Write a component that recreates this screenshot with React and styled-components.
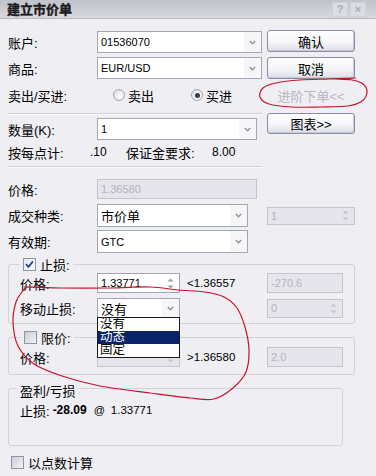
import React from "react";
import styled, { createGlobalStyle } from "styled-components";

const GlobalStyle = createGlobalStyle`
  html, body {
    margin: 0;
    padding: 0;
    background: #eeeef3;
  }
  body {
    font-family: "Liberation Sans", "Noto Sans CJK SC", sans-serif;
    font-size: 13px;
    color: #000;
  }
`;

const Dialog = styled.div`
  position: relative;
  width: 376px;
  height: 476px;
  overflow: hidden;
  background: #eeeef3;
`;

const TitleBar = styled.div`
  display: flex;
  align-items: center;
  height: 18px;
  padding: 0 10px 0 7px;
  background: linear-gradient(#c2c4cb, #ccced4 55%, #d9dadf);
  border-bottom: 1px solid #b6b8c0;
`;

const Title = styled.div`
  flex: 1;
  font-family: "Noto Sans CJK SC", sans-serif;
  font-size: 13px;
  font-weight: bold;
  line-height: 18px;
  color: #1c1c1e;
  -webkit-text-stroke: 0.4px #1c1c1e;
`;

const TitleBtn = styled.div`
  box-sizing: border-box;
  width: 16px;
  height: 15px;
  margin-left: 2px;
  display: flex;
  align-items: center;
  justify-content: center;
  border: 1px solid #cfd0d7;
  background: #dcdde2;
  color: #a9abb5;
  font-size: 11px;
  font-weight: bold;
`;

const Body = styled.div`
  padding: 12px 21px 0 8px;
`;

const Top = styled.div`
  display: flex;
`;

const LeftCol = styled.div`
  width: 254px;
`;

const RightCol = styled.div`
  display: flex;
  flex-direction: column;
  width: 88px;
  margin-left: 5px;
`;

const Row = styled.div`
  display: flex;
  align-items: center;
  height: ${(p) => p.$h || 22}px;
  margin-top: ${(p) => p.$mt || 0}px;
  white-space: nowrap;
`;

const Label = styled.div`
  flex: none;
  width: ${(p) => p.$w || 89}px;
`;

const Cell = styled.div`
  flex: none;
  width: ${(p) => (p.$w ? `${p.$w}px` : "auto")};
  font-size: ${(p) => (p.$num ? 12 : 13)}px;
`;

const Separator = styled.div`
  height: 0;
  margin-top: ${(p) => p.$mt || 0}px;
  border-top: 1px solid #cfd0d8;
  border-bottom: 1px solid #fbfbfd;
`;

const Field = styled.div`
  position: relative;
  flex: none;
  display: flex;
  align-items: center;
  box-sizing: border-box;
  width: ${(p) => p.$w}px;
  height: ${(p) => p.$h || 22}px;
  margin-left: ${(p) => (p.$right ? "auto" : "0")};
  border: 1px solid ${(p) => (p.$disabled ? "#c3c4ce" : "#a2a7b5")};
  background: ${(p) => (p.$disabled ? "#e5e5eb" : "#fff")};
`;

const Value = styled.span`
  flex: 1;
  padding-left: 3px;
  overflow: hidden;
  font-size: ${(p) => (p.$cjk ? 13 : 11)}px;
  color: ${(p) => (p.$disabled ? "#b3b4c0" : "#000")};
`;

const DropBtn = styled.div`
  align-self: stretch;
  width: 17px;
  display: flex;
  align-items: center;
  justify-content: center;
  background: #f6f6f9;
`;

const Arrows = styled.div`
  display: flex;
  flex-direction: column;
  align-items: center;
  gap: 3px;
  width: 13px;
  margin-right: 2px;
  fill: ${(p) => (p.$disabled ? "#c4c5ce" : "#9c9ea8")};
`;

const DropList = styled.div`
  position: absolute;
  top: 100%;
  left: -1px;
  z-index: 2;
  box-sizing: border-box;
  width: calc(100% + 2px);
  border: 1px solid #1a1a1a;
  background: #fff;
`;

const DropItem = styled.div`
  height: 13px;
  overflow: hidden;
  line-height: 13px;
  padding-left: 2px;
  font-size: 12.5px;
  background: ${(p) => (p.$sel ? "#0a246a" : "#fff")};
  color: ${(p) => (p.$sel ? "#fff" : "#000")};
`;

const Button = styled.button`
  box-sizing: border-box;
  width: 88px;
  height: ${(p) => p.$h || 22}px;
  margin: ${(p) => p.$mt || 0}px 0 0;
  padding: 0;
  display: flex;
  align-items: center;
  justify-content: center;
  font: inherit;
  font-size: 13px;
  border: 1px solid ${(p) => (p.disabled ? "transparent" : "#8a8ea6")};
  border-radius: 3px;
  background: ${(p) =>
    p.disabled ? "transparent" : "linear-gradient(#ffffff, #f5f5f9 55%, #dddde8)"};
  box-shadow: ${(p) => (p.disabled ? "none" : "inset -1px -1px 0 #c9c9d6")};
  color: ${(p) => (p.disabled ? "#b6b7c3" : "#000")};
`;

const RadioItem = styled.label`
  display: inline-flex;
  align-items: center;
  gap: 3px;
  width: ${(p) => (p.$w ? `${p.$w}px` : "auto")};
  margin-left: ${(p) => p.$ml || 0}px;
`;

const Radio = styled.span`
  box-sizing: border-box;
  width: 12px;
  height: 12px;
  border-radius: 50%;
  border: 1px solid #a0a4b1;
  background: radial-gradient(circle at 65% 65%, #ffffff, #d9d9e1);
  display: inline-flex;
  align-items: center;
  justify-content: center;

  &::after {
    content: "";
    display: ${(p) => (p.$on ? "block" : "none")};
    width: 5px;
    height: 5px;
    border-radius: 50%;
    background: #3a3a44;
  }
`;

const CheckBox = styled.span`
  box-sizing: border-box;
  flex: none;
  width: 13px;
  height: 13px;
  display: inline-flex;
  align-items: center;
  justify-content: center;
  border: 1px solid #8d94a6;
  background: ${(p) =>
    p.$checked
      ? "linear-gradient(135deg, #e4e6ef, #ffffff)"
      : "linear-gradient(135deg, #cdced5, #f2f2f5)"};
`;

const Group = styled.div`
  position: relative;
  box-sizing: border-box;
  width: ${(p) => p.$w || 347}px;
  height: ${(p) => p.$h}px;
  margin-top: ${(p) => p.$mt || 0}px;
  padding: ${(p) => p.$pt || 0}px 11px 0;
  border: 1px solid #d1d2da;
  border-radius: 3px;
`;

const Legend = styled.div`
  position: absolute;
  top: ${(p) => p.$top || -9}px;
  left: ${(p) => p.$left || 8}px;
  height: 16px;
  display: flex;
  align-items: center;
  gap: 4px;
  padding: 0 3px;
  background: #eeeef3;
`;

const Note = styled.span`
  margin-left: 7px;
  font-size: 11.5px;
`;

const PnlLine = styled.div`
  display: flex;
  align-items: center;
  height: 16px;
  white-space: nowrap;
`;

const Num = styled.span`
  margin-left: ${(p) => p.$ml || 0}px;
  font-size: ${(p) => p.$size || 12}px;
  font-weight: ${(p) => (p.$bold ? "bold" : "normal")};
`;

const CheckRow = styled.div`
  display: flex;
  align-items: center;
  gap: 4px;
  height: 16px;
  margin-top: 8px;
  padding-left: 3px;
`;

const Marks = styled.svg`
  position: absolute;
  left: 0;
  top: 0;
  width: 376px;
  height: 476px;
  pointer-events: none;
  z-index: 5;
`;

const Chevron = () => (
  <svg width="7" height="5" viewBox="0 0 7 5">
    <path d="M0.8 1 L3.5 3.8 L6.2 1" fill="none" stroke="#8e909b" strokeWidth="1.3" />
  </svg>
);

const Tick = () => (
  <svg width="9" height="9" viewBox="0 0 9 9">
    <path d="M1 4.2 L3.4 6.8 L8 1.4" fill="none" stroke="#21479a" strokeWidth="1.8" />
  </svg>
);

const Combo = ({ w, h, value, cjk, children }) => (
  <Field $w={w} $h={h}>
    <Value $cjk={cjk}>{value}</Value>
    <DropBtn>
      <Chevron />
    </DropBtn>
    {children}
  </Field>
);

const Spin = ({ w, h, value, disabled, right }) => (
  <Field $w={w} $h={h} $disabled={disabled} $right={right}>
    <Value $disabled={disabled}>{value}</Value>
    <Arrows $disabled={disabled}>
      <svg width="7" height="4" viewBox="0 0 7 4">
        <path d="M0.5 3.5 L3.5 0.5 L6.5 3.5Z" />
      </svg>
      <svg width="7" height="4" viewBox="0 0 7 4">
        <path d="M0.5 0.5 L3.5 3.5 L6.5 0.5Z" />
      </svg>
    </Arrows>
  </Field>
);

// Catmull-Rom through hand-drawn points
const smooth = (pts) => {
  const p = [pts[0], ...pts, pts[pts.length - 1]];
  let d = `M${p[1][0]} ${p[1][1]}`;
  for (let i = 1; i < p.length - 2; i++) {
    const [x0, y0] = p[i - 1];
    const [x1, y1] = p[i];
    const [x2, y2] = p[i + 1];
    const [x3, y3] = p[i + 2];
    d += ` C${x1 + (x2 - x0) / 6} ${y1 + (y2 - y0) / 6} ${x2 - (x3 - x1) / 6} ${
      y2 - (y3 - y1) / 6
    } ${x2} ${y2}`;
  }
  return d;
};

const smallLoop = [
  [336, 79], [352, 80], [363, 84], [367, 92], [362, 101], [348, 106],
  [320, 107], [292, 107], [269, 104], [260, 97], [263, 88], [276, 83],
  [300, 80], [330, 79], [356, 78],
];

const bigLoop = [
  [24, 287], [60, 288], [110, 288], [150, 287], [178, 290], [205, 292],
  [224, 297], [237, 308], [245, 327], [249, 350], [246, 372], [233, 388],
  [214, 399], [190, 398], [150, 393], [100, 386], [62, 376], [34, 364],
  [18, 346], [13, 322], [16, 302], [22, 292], [26, 287],
];

const trailOptions = ["没有", "动态", "固定"];

export default function App() {
  return (
    <>
      <GlobalStyle />
      <Dialog>
        <TitleBar>
          <Title>建立市价单</Title>
          <TitleBtn>?</TitleBtn>
          <TitleBtn>×</TitleBtn>
        </TitleBar>
        <Body>
          <Top>
            <LeftCol>
              <Row>
                <Label>账户:</Label>
                <Combo w={165} value="01536070" />
              </Row>
              <Row $mt={4}>
                <Label>商品:</Label>
                <Combo w={165} value="EUR/USD" />
              </Row>
              <Row $mt={6} $h={20}>
                <Label>卖出/买进:</Label>
                <RadioItem $w={78} $ml={16}>
                  <Radio />
                  卖出
                </RadioItem>
                <RadioItem>
                  <Radio $on />
                  买进
                </RadioItem>
              </Row>
              <Separator $mt={8} />
              <Row $mt={3}>
                <Label>数量(K):</Label>
                <Combo w={160} value="1" />
              </Row>
              <Row $mt={4} $h={16}>
                <Cell $w={82}>按每点计:</Cell>
                <Cell $w={36} $num>
                  .10
                </Cell>
                <Cell $w={86}>保证金要求:</Cell>
                <Cell $num>8.00</Cell>
              </Row>
              <Separator $mt={6} />
            </LeftCol>
            <RightCol>
              <Button $mt={-1}>确认</Button>
              <Button $mt={5}>取消</Button>
              <Button $mt={6} $h={20} disabled>
                进阶下单&lt;&lt;
              </Button>
              <Button $mt={8} $h={21}>
                图表&gt;&gt;
              </Button>
            </RightCol>
          </Top>

          <Row $mt={11} $h={20}>
            <Label>价格:</Label>
            <Field $w={160} $h={20} $disabled>
              <Value $disabled>1.36580</Value>
            </Field>
          </Row>
          <Row $mt={5} $h={23}>
            <Label>成交种类:</Label>
            <Combo w={151} h={23} value="市价单" cjk />
            <Spin w={88} h={18} value="1" disabled right />
          </Row>
          <Row $mt={3} $h={23}>
            <Label>有效期:</Label>
            <Combo w={151} h={23} value="GTC" />
          </Row>

          <Group $mt={11} $h={60} $pt={8}>
            <Legend $left={11}>
              <CheckBox $checked>
                <Tick />
              </CheckBox>
              止损:
            </Legend>
            <Row $h={20}>
              <Label $w={77}>价格:</Label>
              <Spin w={83} h={20} value="1.33771" />
              <Note>&lt;1.36557</Note>
              <Field $w={76} $h={20} $disabled $right>
                <Value $disabled>-270.6</Value>
              </Field>
            </Row>
            <Row $mt={5} $h={20}>
              <Label $w={77}>移动止损:</Label>
              <Combo w={83} h={20} value="没有" cjk>
                <DropList>
                  {trailOptions.map((t) => (
                    <DropItem key={t} $sel={t === "动态"}>
                      {t}
                    </DropItem>
                  ))}
                </DropList>
              </Combo>
              <Spin w={76} h={19} value="0" disabled right />
            </Row>
          </Group>

          <Group $mt={13} $h={38} $pt={9}>
            <Legend $left={12}>
              <CheckBox />
              限价:
            </Legend>
            <Row $h={20}>
              <Label $w={77}>价格:</Label>
              <Spin w={83} h={20} disabled />
              <Note>&gt;1.36580</Note>
              <Field $w={76} $h={20} $disabled $right>
                <Value $disabled>2.0</Value>
              </Field>
            </Row>
          </Group>

          <Group $mt={13} $h={58} $pt={13} $w={335}>
            <Legend $left={8} $top={-7}>
              盈利/亏损
            </Legend>
            <PnlLine>
              止损:
              <Num $ml={3} $bold>
                -28.09
              </Num>
              <Num $ml={7} $size={11}>
                @
              </Num>
              <Num $ml={6} $size={11.5}>
                1.33771
              </Num>
            </PnlLine>
          </Group>

          <CheckRow>
            <CheckBox />
            以点数计算
          </CheckRow>
        </Body>

        <Marks viewBox="0 0 376 476">
          <path d={smooth(smallLoop)} fill="none" stroke="#c4142c" strokeWidth="1.2" />
          <path d={smooth(bigLoop)} fill="none" stroke="#c4142c" strokeWidth="1.2" />
        </Marks>
      </Dialog>
    </>
  );
}
